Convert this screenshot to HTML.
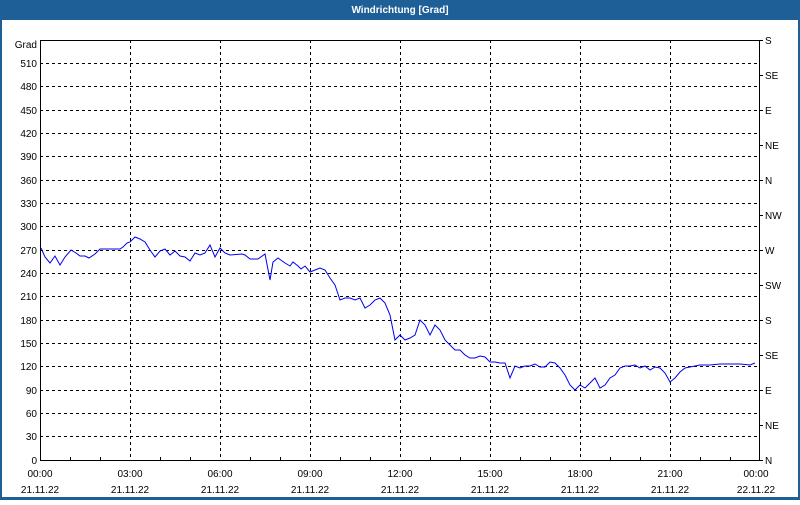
<!DOCTYPE html>
<html><head><style>
body{margin:0;width:800px;height:500px;overflow:hidden;background:#fff;font-family:"Liberation Sans",sans-serif;}
</style></head><body>
<svg width="800" height="500" xmlns="http://www.w3.org/2000/svg" font-family="Liberation Sans, sans-serif" font-size="10">
<rect x="0" y="0" width="800" height="500" fill="#1d5f96"/>
<rect x="2" y="20" width="796" height="477" fill="#fff"/>
<text x="400" y="13" fill="#fff" font-weight="bold" text-anchor="middle" font-size="10">Windrichtung [Grad]</text>
<g stroke="#000" stroke-dasharray="3,3" stroke-width="1">
<path d="M40 63.5H760M40 86.5H760M40 110.5H760M40 133.5H760M40 156.5H760M40 180.5H760M40 203.5H760M40 226.5H760M40 250.5H760M40 273.5H760M40 296.5H760M40 320.5H760M40 343.5H760M40 366.5H760M40 390.5H760M40 413.5H760M40 436.5H760"/>
<path d="M130.5 40V460M220.5 40V460M310.5 40V460M400.5 40V460M490.5 40V460M580.5 40V460M670.5 40V460"/>
</g>
<rect x="40.5" y="40.5" width="719" height="420" fill="none" stroke="#000"/>
<g stroke="#000"><path d="M760 40.5h3M760 75.5h3M760 110.5h3M760 145.5h3M760 180.5h3M760 215.5h3M760 250.5h3M760 285.5h3M760 320.5h3M760 355.5h3M760 390.5h3M760 425.5h3M760 460.5h3"/>
<path d="M70.5 460v-3M100.5 460v-3M160.5 460v-3M190.5 460v-3M250.5 460v-3M280.5 460v-3M340.5 460v-3M370.5 460v-3M430.5 460v-3M460.5 460v-3M520.5 460v-3M550.5 460v-3M610.5 460v-3M640.5 460v-3M700.5 460v-3M730.5 460v-3"/></g>
<g text-anchor="end" fill="#000">
<text x="37" y="48">Grad</text>
<text x="37" y="67">510</text><text x="37" y="90">480</text><text x="37" y="114">450</text><text x="37" y="137">420</text><text x="37" y="160">390</text><text x="37" y="184">360</text><text x="37" y="207">330</text><text x="37" y="230">300</text><text x="37" y="254">270</text><text x="37" y="277">240</text><text x="37" y="300">210</text><text x="37" y="324">180</text><text x="37" y="347">150</text><text x="37" y="370">120</text><text x="37" y="394">90</text><text x="37" y="417">60</text><text x="37" y="440">30</text><text x="37" y="464">0</text>
</g>
<g fill="#000">
<text x="765" y="44">S</text><text x="765" y="79">SE</text><text x="765" y="114">E</text><text x="765" y="149">NE</text><text x="765" y="184">N</text><text x="765" y="219">NW</text><text x="765" y="254">W</text><text x="765" y="289">SW</text><text x="765" y="324">S</text><text x="765" y="359">SE</text><text x="765" y="394">E</text><text x="765" y="429">NE</text><text x="765" y="464">N</text>
</g>
<g text-anchor="middle" fill="#000">
<text x="40" y="477">00:00</text><text x="40" y="493">21.11.22</text>
<text x="130" y="477">03:00</text><text x="130" y="493">21.11.22</text>
<text x="220" y="477">06:00</text><text x="220" y="493">21.11.22</text>
<text x="310" y="477">09:00</text><text x="310" y="493">21.11.22</text>
<text x="400" y="477">12:00</text><text x="400" y="493">21.11.22</text>
<text x="490" y="477">15:00</text><text x="490" y="493">21.11.22</text>
<text x="580" y="477">18:00</text><text x="580" y="493">21.11.22</text>
<text x="670" y="477">21:00</text><text x="670" y="493">21.11.22</text>
<text x="756" y="477">00:00</text><text x="756" y="493">22.11.22</text>
</g>
<polyline fill="none" stroke="#0000ee" stroke-width="1" points="41,248 45,257 50,263 55,256 60,265 65,257 71,250 76,253 80,256 85,256 89,258 95,254 100,249 120,249 123,247 127,243 130,242 135,237 140,239 145,242 150,250 155,257 160,251 165,249 170,255 175,251 180,256 185,257 190,261 195,253 200,255 205,253 210,245 215,257 220,248 225,253 230,255 242,254 245,255 250,259 258,259 265,254 270,280 273,262 278,258 285,263 290,266 293,262 298,266 301,269 305,266 310,272 315,270 320,268 325,270 330,278 335,285 340,300 345,298 350,298 355,300 360,298 365,308 370,305 375,300 380,298 385,303 390,315 395,340 400,335 405,340 410,338 415,335 420,320 425,325 430,335 435,325 440,330 445,340 450,345 455,350 460,350 465,355 470,358 475,358 480,356 485,357 490,362 495,362 500,363 505,363 510,378 515,366 520,368 525,366 530,366 535,364 540,367 545,367 550,362 555,363 560,368 565,375 570,385 575,390 580,385 585,388 590,383 595,378 600,388 605,385 610,378 615,375 620,368 625,366 630,366 635,365 640,368 645,366 650,370 655,367 660,368 665,373 670,382 675,378 680,372 685,368 690,367 700,365 710,365 720,364 740,364 750,365 755,363"/>
</svg>
</body></html>
